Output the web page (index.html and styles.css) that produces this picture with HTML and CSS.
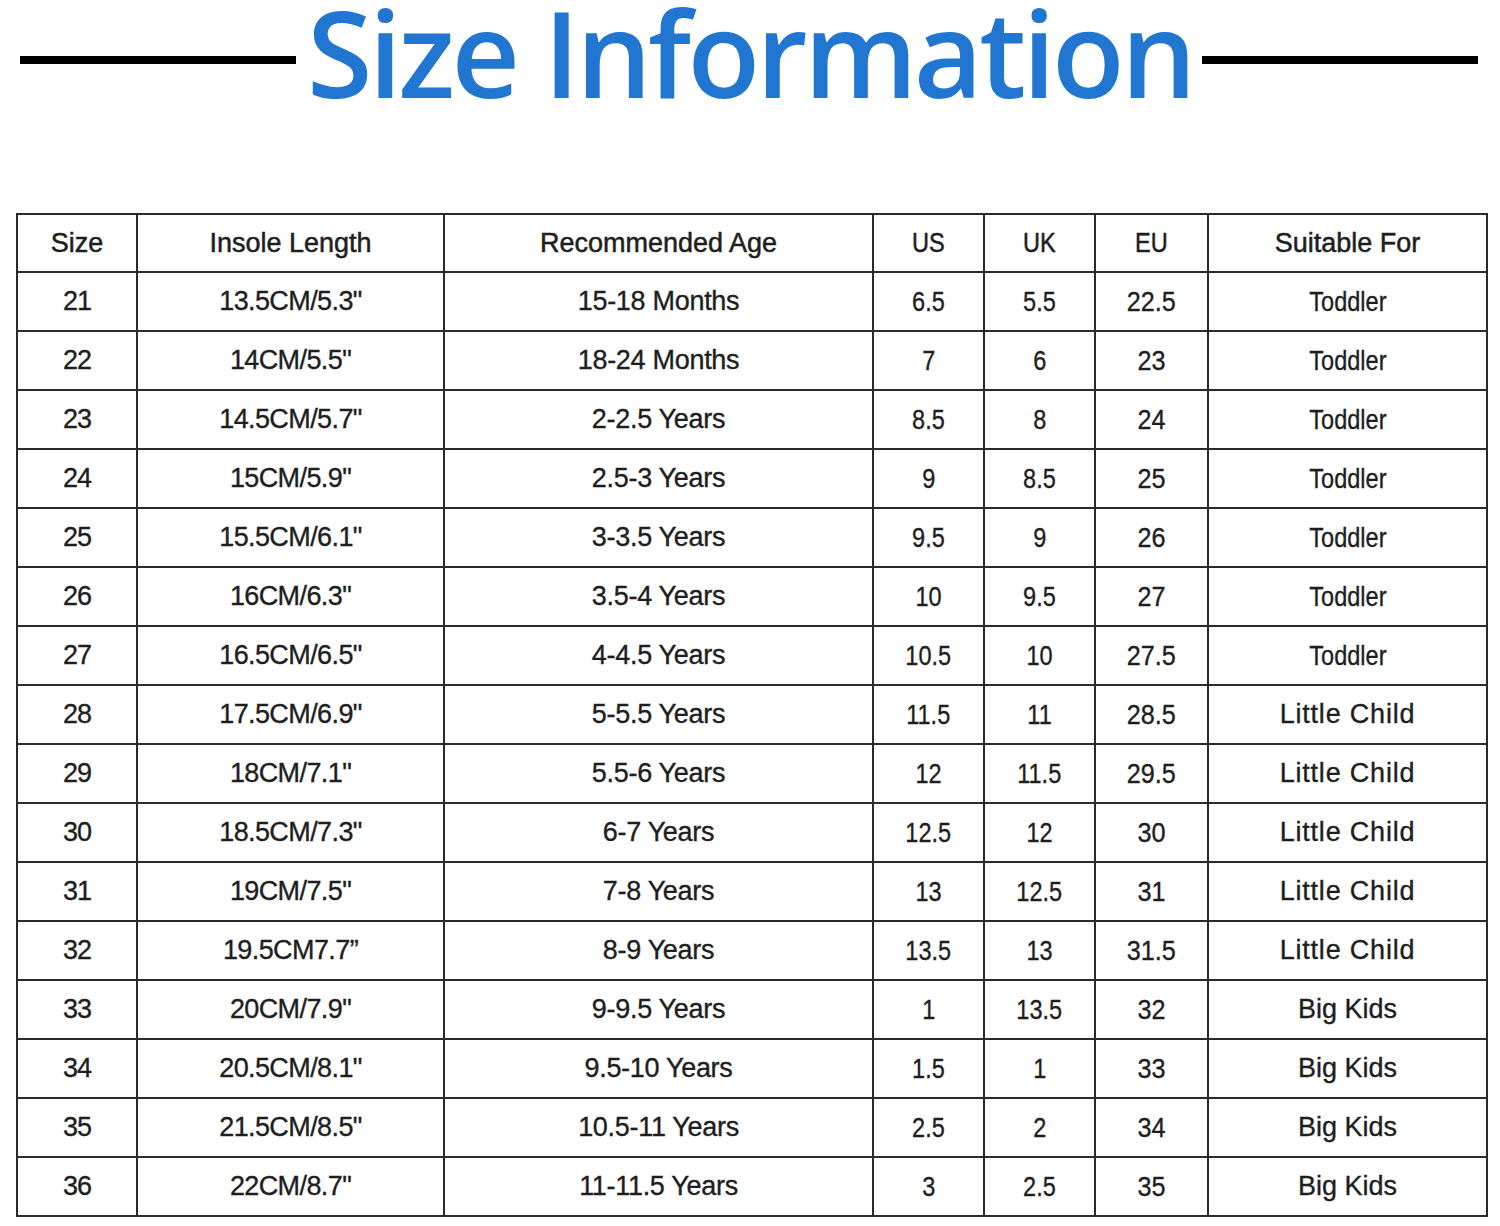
FILE: index.html
```html
<!DOCTYPE html>
<html>
<head>
<meta charset="utf-8">
<link rel="stylesheet" href="styles.css">
</head>
<body>
<header class="head">
  <span class="rule rule-left"></span>
  <h1 class="title">Size Information</h1>
  <span class="rule rule-right"></span>
</header>
<table class="chart">
  <colgroup>
    <col class="c-size"><col class="c-len"><col class="c-age"><col class="c-us"><col class="c-uk"><col class="c-eu"><col class="c-for">
  </colgroup>
  <thead>
    <tr><th>Size</th><th>Insole Length</th><th>Recommended Age</th><th><span class="n">US</span></th><th><span class="n">UK</span></th><th><span class="n">EU</span></th><th>Suitable For</th></tr>
  </thead>
  <tbody>
    <tr><td>21</td><td class="len">13.5CM/5.3"</td><td class="age">15-18 Months</td><td><span class="n">6.5</span></td><td><span class="n">5.5</span></td><td><span class="m">22.5</span></td><td><span class="n">Toddler</span></td></tr>
    <tr><td>22</td><td class="len">14CM/5.5"</td><td class="age">18-24 Months</td><td><span class="n">7</span></td><td><span class="n">6</span></td><td><span class="m">23</span></td><td><span class="n">Toddler</span></td></tr>
    <tr><td>23</td><td class="len">14.5CM/5.7"</td><td class="age">2-2.5 Years</td><td><span class="n">8.5</span></td><td><span class="n">8</span></td><td><span class="m">24</span></td><td><span class="n">Toddler</span></td></tr>
    <tr><td>24</td><td class="len">15CM/5.9"</td><td class="age">2.5-3 Years</td><td><span class="n">9</span></td><td><span class="n">8.5</span></td><td><span class="m">25</span></td><td><span class="n">Toddler</span></td></tr>
    <tr><td>25</td><td class="len">15.5CM/6.1"</td><td class="age">3-3.5 Years</td><td><span class="n">9.5</span></td><td><span class="n">9</span></td><td><span class="m">26</span></td><td><span class="n">Toddler</span></td></tr>
    <tr><td>26</td><td class="len">16CM/6.3"</td><td class="age">3.5-4 Years</td><td><span class="n">10</span></td><td><span class="n">9.5</span></td><td><span class="m">27</span></td><td><span class="n">Toddler</span></td></tr>
    <tr><td>27</td><td class="len">16.5CM/6.5"</td><td class="age">4-4.5 Years</td><td><span class="n">10.5</span></td><td><span class="n">10</span></td><td><span class="m">27.5</span></td><td><span class="n">Toddler</span></td></tr>
    <tr><td>28</td><td class="len">17.5CM/6.9"</td><td class="age">5-5.5 Years</td><td><span class="n">11.5</span></td><td><span class="n">11</span></td><td><span class="m">28.5</span></td><td class="wide">Little Child</td></tr>
    <tr><td>29</td><td class="len">18CM/7.1"</td><td class="age">5.5-6 Years</td><td><span class="n">12</span></td><td><span class="n">11.5</span></td><td><span class="m">29.5</span></td><td class="wide">Little Child</td></tr>
    <tr><td>30</td><td class="len">18.5CM/7.3"</td><td class="age">6-7 Years</td><td><span class="n">12.5</span></td><td><span class="n">12</span></td><td><span class="m">30</span></td><td class="wide">Little Child</td></tr>
    <tr><td>31</td><td class="len">19CM/7.5"</td><td class="age">7-8 Years</td><td><span class="n">13</span></td><td><span class="n">12.5</span></td><td><span class="m">31</span></td><td class="wide">Little Child</td></tr>
    <tr><td>32</td><td class="len">19.5CM7.7”</td><td class="age">8-9 Years</td><td><span class="n">13.5</span></td><td><span class="n">13</span></td><td><span class="m">31.5</span></td><td class="wide">Little Child</td></tr>
    <tr><td>33</td><td class="len">20CM/7.9"</td><td class="age">9-9.5 Years</td><td><span class="n">1</span></td><td><span class="n">13.5</span></td><td><span class="m">32</span></td><td>Big Kids</td></tr>
    <tr><td>34</td><td class="len">20.5CM/8.1"</td><td class="age">9.5-10 Years</td><td><span class="n">1.5</span></td><td><span class="n">1</span></td><td><span class="m">33</span></td><td>Big Kids</td></tr>
    <tr><td>35</td><td class="len">21.5CM/8.5"</td><td class="age">10.5-11 Years</td><td><span class="n">2.5</span></td><td><span class="n">2</span></td><td><span class="m">34</span></td><td>Big Kids</td></tr>
    <tr><td>36</td><td class="len">22CM/8.7"</td><td class="age">11-11.5 Years</td><td><span class="n">3</span></td><td><span class="n">2.5</span></td><td><span class="m">35</span></td><td>Big Kids</td></tr>
  </tbody>
</table>
</body>
</html>
```
FILE: styles.css
```css
html, body {
  margin: 0;
  padding: 0;
  background: #ffffff;
}
body {
  width: 1500px;
  height: 1226px;
  overflow: hidden;
  font-family: "Liberation Sans", Arial, sans-serif;
}
.head {
  display: flex;
  align-items: flex-start;
  height: 100px;
  padding-left: 20px;
  padding-right: 22px;
}
.rule {
  display: block;
  height: 8px;
  margin-top: 56px;
  background: #000;
}
.rule-left { width: 276px; margin-right: 11px; flex: none; }
.rule-right { flex: 1; margin-left: 9px; }
.title {
  margin: 0;
  font-family: "Open Sans", sans-serif;
  font-weight: 600;
  font-size: 119px;
  line-height: 104px;
  color: #2176d2;
  white-space: nowrap;
  letter-spacing: -3.7px;
}
.chart {
  margin: 113px 0 0 16px;
  width: 1470px;
  table-layout: fixed;
  border-collapse: collapse;
  border: 2px solid #2a2a2a;
}
.c-size { width: 120px; }
.c-len { width: 307px; }
.c-age { width: 429px; }
.c-us { width: 111px; }
.c-uk { width: 111px; }
.c-eu { width: 113px; }
.c-for { width: 279px; }
.chart th, .chart td {
  border: 2px solid #2a2a2a;
  height: 57px;
  padding: 0;
  text-align: center;
  vertical-align: middle;
  font-size: 27px;
  font-weight: 400;
  color: #1e1e1e;
  -webkit-text-stroke: 0.35px #1e1e1e;
}
.chart th { height: 56px; -webkit-text-stroke: 0.5px #1e1e1e; }
.chart td:first-child { letter-spacing: -1px; }
.n {
  display: inline-block;
  font-size: 28px;
  transform: scaleX(0.84);
}
.m {
  display: inline-block;
  font-size: 28px;
  transform: scaleX(0.9);
}
.len { letter-spacing: -0.6px; }
.age { letter-spacing: -0.3px; -webkit-text-stroke: 0.6px #1e1e1e; }
.wide { font-size: 28px; letter-spacing: 0.8px; }
```
